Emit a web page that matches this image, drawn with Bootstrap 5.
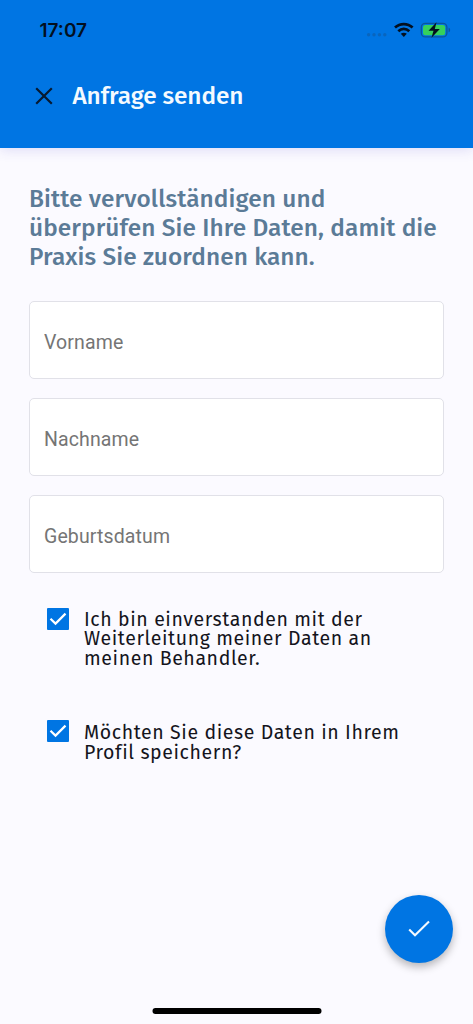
<!DOCTYPE html>
<html lang="de">
<head>
<meta charset="utf-8">
<meta name="viewport" content="width=device-width, initial-scale=1">
<title>Anfrage senden</title>
<link href="https://cdn.jsdelivr.net/npm/bootstrap@5.3.0/dist/css/bootstrap.min.css" rel="stylesheet">
<style>
  body { background: #fbfaff; font-family: "Fira Sans", "Noto Sans", sans-serif; color: #14141c; }
  .screen { height: 1024px; overflow: hidden; }
  .app-header { height: 148px; background: #0075e3; box-shadow: 0 2px 12px rgba(70, 60, 200, .16); }
  .status { height: 60px; padding: 0 22px 0 39.5px; }
  .clock { font: 600 19px/24px Inter, sans-serif; color: #03101f; letter-spacing: 0; padding-top: 2px; }
  .title-row { height: 72px; padding-left: 34.5px; }
  .app-title { font-size: 24.4px; font-weight: 500; line-height: 30px; letter-spacing: -.1px; color: #f4faff; margin-left: 20px; }
  .intro { font-size: 24.4px; font-weight: 500; line-height: 29.2px; color: #5b7b97; letter-spacing: .1px; }
  .page-body { padding: 36px 29px 0; }
  .field { height: 78px; border: 1px solid #e1e1e8; border-radius: 5px; padding: 5px 14px 0; font: 400 19.5px/24px Roboto, sans-serif; letter-spacing: .12px; color: #757575; box-shadow: none; }
  .field::placeholder { color: #757575; opacity: 1; }
  .fields { gap: 19px; margin-top: 29px; }
  .consent { padding-left: 18px; gap: 15px; }
  .consent-first { margin-top: 35px; }
  .consent-second { margin-top: 52px; }
  .consent-text { font-size: 19.5px; line-height: 19.5px; letter-spacing: .6px; padding-top: 2px; }
  .consent-second .consent-text { padding-top: 3px; }
  .fab { right: 20px; bottom: 61px; width: 68px; height: 68px; background: #0075e3; box-shadow: 0 4px 8px rgba(0, 0, 0, .28); }
  .home-bar { bottom: 10px; width: 169px; height: 6px; background: #000; }
</style>
</head>
<body>
<div class="screen position-relative">
  <header class="app-header">
    <div class="status d-flex align-items-center justify-content-between">
      <span class="clock">17:07</span>
      <svg width="86" height="20" viewBox="365 20 86 20" aria-hidden="true">
        <g fill="#0965bd"><circle cx="368.6" cy="34.8" r="1.7"/><circle cx="374" cy="34.8" r="1.7"/><circle cx="379.4" cy="34.8" r="1.7"/><circle cx="384.8" cy="34.8" r="1.7"/></g>
        <g fill="none" stroke="#03101f" stroke-width="2.7"><path d="M395 27.6c5-4.7 12.600-4.700 17.600 0"/><path d="M398.300 31.200c3.200-3 7.800-3 11 0"/></g>
        <path d="M400.800 33.800c1.800-1.500 4.200-1.500 6 0l-3 3.100z" fill="#03101f"/>
        <rect x="421.300" y="23.300" width="25.600" height="13.600" rx="4" fill="none" stroke="#0b559b" stroke-width="1.300"/>
        <rect x="423" y="25" width="22.200" height="10.200" rx="2.300" fill="#35d05c"/>
        <path d="M448.600 27.800c2 .5 2 4 0 4.500z" fill="#0b559b"/>
        <path d="M436.500 22.300l-8 8.500h5l-2 7 8.300-8.900h-5z" fill="#03101f"/>
      </svg>
    </div>
    <div class="title-row d-flex align-items-center">
      <svg width="18" height="18" viewBox="0 0 18 18" fill="none" stroke="#071a30" stroke-width="2.200" role="img" aria-label="Schließen"><path d="M1.200 1.200l15.600 15.600M16.800 1.200L1.200 16.800"/></svg>
      <h1 class="app-title mb-0">Anfrage senden</h1>
    </div>
  </header>

  <main class="page-body">
    <h2 class="intro mb-0">Bitte vervollständigen und<br>überprüfen Sie Ihre Daten, damit die<br>Praxis Sie zuordnen kann.</h2>
    <form>
      <div class="fields d-flex flex-column">
        <input class="form-control field" type="text" placeholder="Vorname">
        <input class="form-control field" type="text" placeholder="Nachname">
        <input class="form-control field" type="text" placeholder="Geburtsdatum">
      </div>
      <div class="consent consent-first d-flex">
        <svg class="flex-shrink-0" width="22" height="22" viewBox="0 0 22 22"><rect width="22" height="22" rx="1" fill="#0075e3"/><path d="M3.500 10.800l5 4.800 10-10" fill="none" stroke="#fff" stroke-width="2.200"/></svg>
        <div class="consent-text">Ich bin einverstanden mit der<br>Weiterleitung meiner Daten an<br>meinen Behandler.</div>
      </div>
      <div class="consent consent-second d-flex">
        <svg class="flex-shrink-0" width="22" height="22" viewBox="0 0 22 22"><rect width="22" height="22" rx="1" fill="#0075e3"/><path d="M3.500 10.800l5 4.800 10-10" fill="none" stroke="#fff" stroke-width="2.200"/></svg>
        <div class="consent-text">Möchten Sie diese Daten in Ihrem<br>Profil speichern?</div>
      </div>
    </form>
  </main>

  <button class="fab btn position-absolute rounded-circle border-0 p-0 d-flex align-items-center justify-content-center" type="button" aria-label="Senden">
    <svg width="22" height="18" viewBox="0 0 22 18" fill="none" stroke="#f4faff" stroke-width="2.1"><path d="M1.200 9.500l5.800 5.800L21 1.500"/></svg>
  </button>
  <div class="home-bar position-absolute start-50 translate-middle-x rounded-pill"></div>
</div>
<script src="https://cdn.jsdelivr.net/npm/bootstrap@5.3.0/dist/js/bootstrap.bundle.min.js"></script>
</body>
</html>
